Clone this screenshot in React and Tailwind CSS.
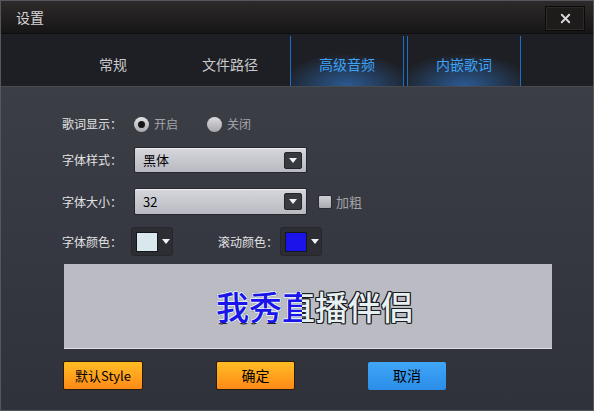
import { X } from 'lucide-react';

const font = { fontFamily: '"Noto Sans CJK SC", "Noto Sans", sans-serif' };

function Caret() {
  return (
    <svg width="8" height="5" viewBox="0 0 8 5">
      <path d="M0 0 L8 0 L4 5 Z" fill="#f2f2f2" />
    </svg>
  );
}

function Select({ value, tall }) {
  return (
    <div
      className={`flex ${tall ? 'h-[27px]' : 'h-[26px]'} w-[173px] items-center justify-between rounded-[2px] border border-[#26272c] bg-gradient-to-b from-[#d6d6dc] to-[#b9b9c2] pl-[8px] pr-[4px] text-[13px] text-black shadow-[inset_0_1px_0_#eeeef2]`}
    >
      <span>{value}</span>
      <div className="flex h-[17px] w-[18px] items-center justify-center rounded-[2px] border border-[#24252a] bg-[#383a42]">
        <Caret />
      </div>
    </div>
  );
}

function ColorPicker({ color }) {
  return (
    <div className="flex h-[29px] w-[42px] items-center gap-[4px] rounded-[3px] border border-[#25272c] bg-[#2c2e34] pl-[4px]">
      <div className="h-[20px] w-[22px] border border-[#15161a]" style={{ background: color }} />
      <Caret />
    </div>
  );
}

function Tab({ label, active }) {
  if (active) {
    return (
      <div className="flex w-[114px] items-center justify-center border-x border-[#1b6fc4] bg-[radial-gradient(ellipse_60%_65%_at_50%_100%,rgba(45,105,175,0.8),rgba(30,31,36,0)_100%)] pt-[6px] text-[14px] text-[#3ea2f6]">
        {label}
      </div>
    );
  }
  return (
    <div className="flex w-[114px] items-center justify-center pt-[6px] text-[14px] text-[#c9c9cc]">
      {label}
    </div>
  );
}

export default function App() {
  const tabs = [
    { label: '常规', active: false },
    { label: '文件路径', active: false },
    { label: '高级音频', active: true },
    { label: '内嵌歌词', active: true },
  ];

  return (
    <div style={font} className="flex h-[411px] w-[594px] flex-col overflow-hidden border border-[#55575d] bg-[#1e1f24] select-none">
      {/* Title bar */}
      <div className="flex h-[33px] items-center justify-between border-b border-[#0e0e10] bg-gradient-to-b from-[#2e2a2a] to-[#171617] pl-[15px] pr-[8px]">
        <span className="text-[14px] text-[#d6d6d6]">设置</span>
        <button className="mt-[2px] flex h-[25px] w-[40px] items-center justify-center border border-[#0b0b0b] bg-[#1e1b1b] shadow-[inset_0_0_0_1px_#2e2a2a]">
          <X className="h-[15px] w-[15px] text-[#d8d8dc]" strokeWidth={3} />
        </button>
      </div>

      {/* Tabs */}
      <div className="flex h-[53px] gap-[3px] border-b border-[#4a4b51] bg-[#1e1f24] pl-[55px] pt-[2px]">
        {tabs.map((t) => (
          <Tab key={t.label} label={t.label} active={t.active} />
        ))}
      </div>

      {/* Content */}
      <div className="flex flex-1 flex-col bg-gradient-to-b from-[#3c3e46] to-[#2f323b] pl-[61px] pt-[27px] text-[12px] text-[#e2e2e4]">
        <div className="flex h-[20px] items-center">
          <span className="w-[72px]">歌词显示：</span>
          <div className="flex items-center gap-[5px] text-[#a3a3a8]">
            <span className="flex h-[15px] w-[15px] items-center justify-center rounded-full bg-gradient-to-b from-[#e4e4e6] to-[#a9a9ae]">
              <span className="h-[7px] w-[7px] rounded-full bg-[#151517]" />
            </span>
            <span>开启</span>
          </div>
          <div className="ml-[29px] flex items-center gap-[5px] text-[#a3a3a8]">
            <span className="h-[15px] w-[15px] rounded-full bg-gradient-to-b from-[#dcdce0] to-[#a6a6ac]" />
            <span>关闭</span>
          </div>
        </div>

        <div className="mt-[13px] flex items-center">
          <span className="w-[72px]">字体样式：</span>
          <Select value="黑体" />
        </div>

        <div className="mt-[15px] flex items-center">
          <span className="w-[72px]">字体大小：</span>
          <Select value="32" tall />
          <div className="ml-[11px] flex items-center gap-[4px] text-[13px] text-[#a3a3a8]">
            <span className="h-[14px] w-[14px] rounded-[2px] border border-[#2a2b30] bg-gradient-to-b from-[#cfcfd5] to-[#a9a9b1]" />
            <span>加粗</span>
          </div>
        </div>

        <div className="mt-[12px] flex items-center">
          <span className="w-[69px]">字体颜色：</span>
          <ColorPicker color="#d9e8ec" />
          <span className="ml-[45px] w-[62px]">滚动颜色：</span>
          <ColorPicker color="#1a14ea" />
        </div>

        <div className="ml-[2px] mt-[8px] flex h-[85px] w-[488px] items-center justify-center border-b border-[#dcdce2] bg-[#bbbbc3] pl-[14px]">
          <div className="relative text-[33px] font-medium leading-none">
            <span className="text-[#e6eff2] [text-shadow:1px_1px_0_#1c1c1e,-1px_-1px_0_#1c1c1e,1px_-1px_0_#1c1c1e,-1px_1px_0_#1c1c1e,0_1px_0_#1c1c1e,0_-1px_0_#1c1c1e,1px_0_0_#1c1c1e,-1px_0_0_#1c1c1e]">
              我秀直播伴侣
            </span>
            <span className="absolute left-0 top-0 w-[86px] overflow-hidden whitespace-nowrap text-[#1a14ea] [text-shadow:1px_1px_0_#dfe9ee,-1px_-1px_0_#dfe9ee,1px_-1px_0_#dfe9ee,-1px_1px_0_#dfe9ee,0_1px_0_#dfe9ee,0_-1px_0_#dfe9ee,1px_0_0_#dfe9ee,-1px_0_0_#dfe9ee]">
              我秀直播伴侣
            </span>
          </div>
        </div>

        <div className="mt-[12px] flex items-center text-[13px] text-black">
          <button className="ml-[1px] flex h-[29px] w-[80px] items-center justify-center rounded-[2px] border border-[#2a1c0a] bg-gradient-to-b from-[#ffbd24] to-[#ff8918]">
            默认Style
          </button>
          <button className="ml-[73px] flex h-[29px] w-[79px] items-center justify-center rounded-[2px] border border-[#2a1c0a] bg-gradient-to-b from-[#ffbd24] to-[#ff8918] text-[14px]">
            确定
          </button>
          <button className="ml-[73px] flex h-[28px] w-[78px] items-center justify-center rounded-[2px] bg-gradient-to-b from-[#40a6f6] to-[#2b8de9] text-[14px]">
            取消
          </button>
        </div>
      </div>
    </div>
  );
}
